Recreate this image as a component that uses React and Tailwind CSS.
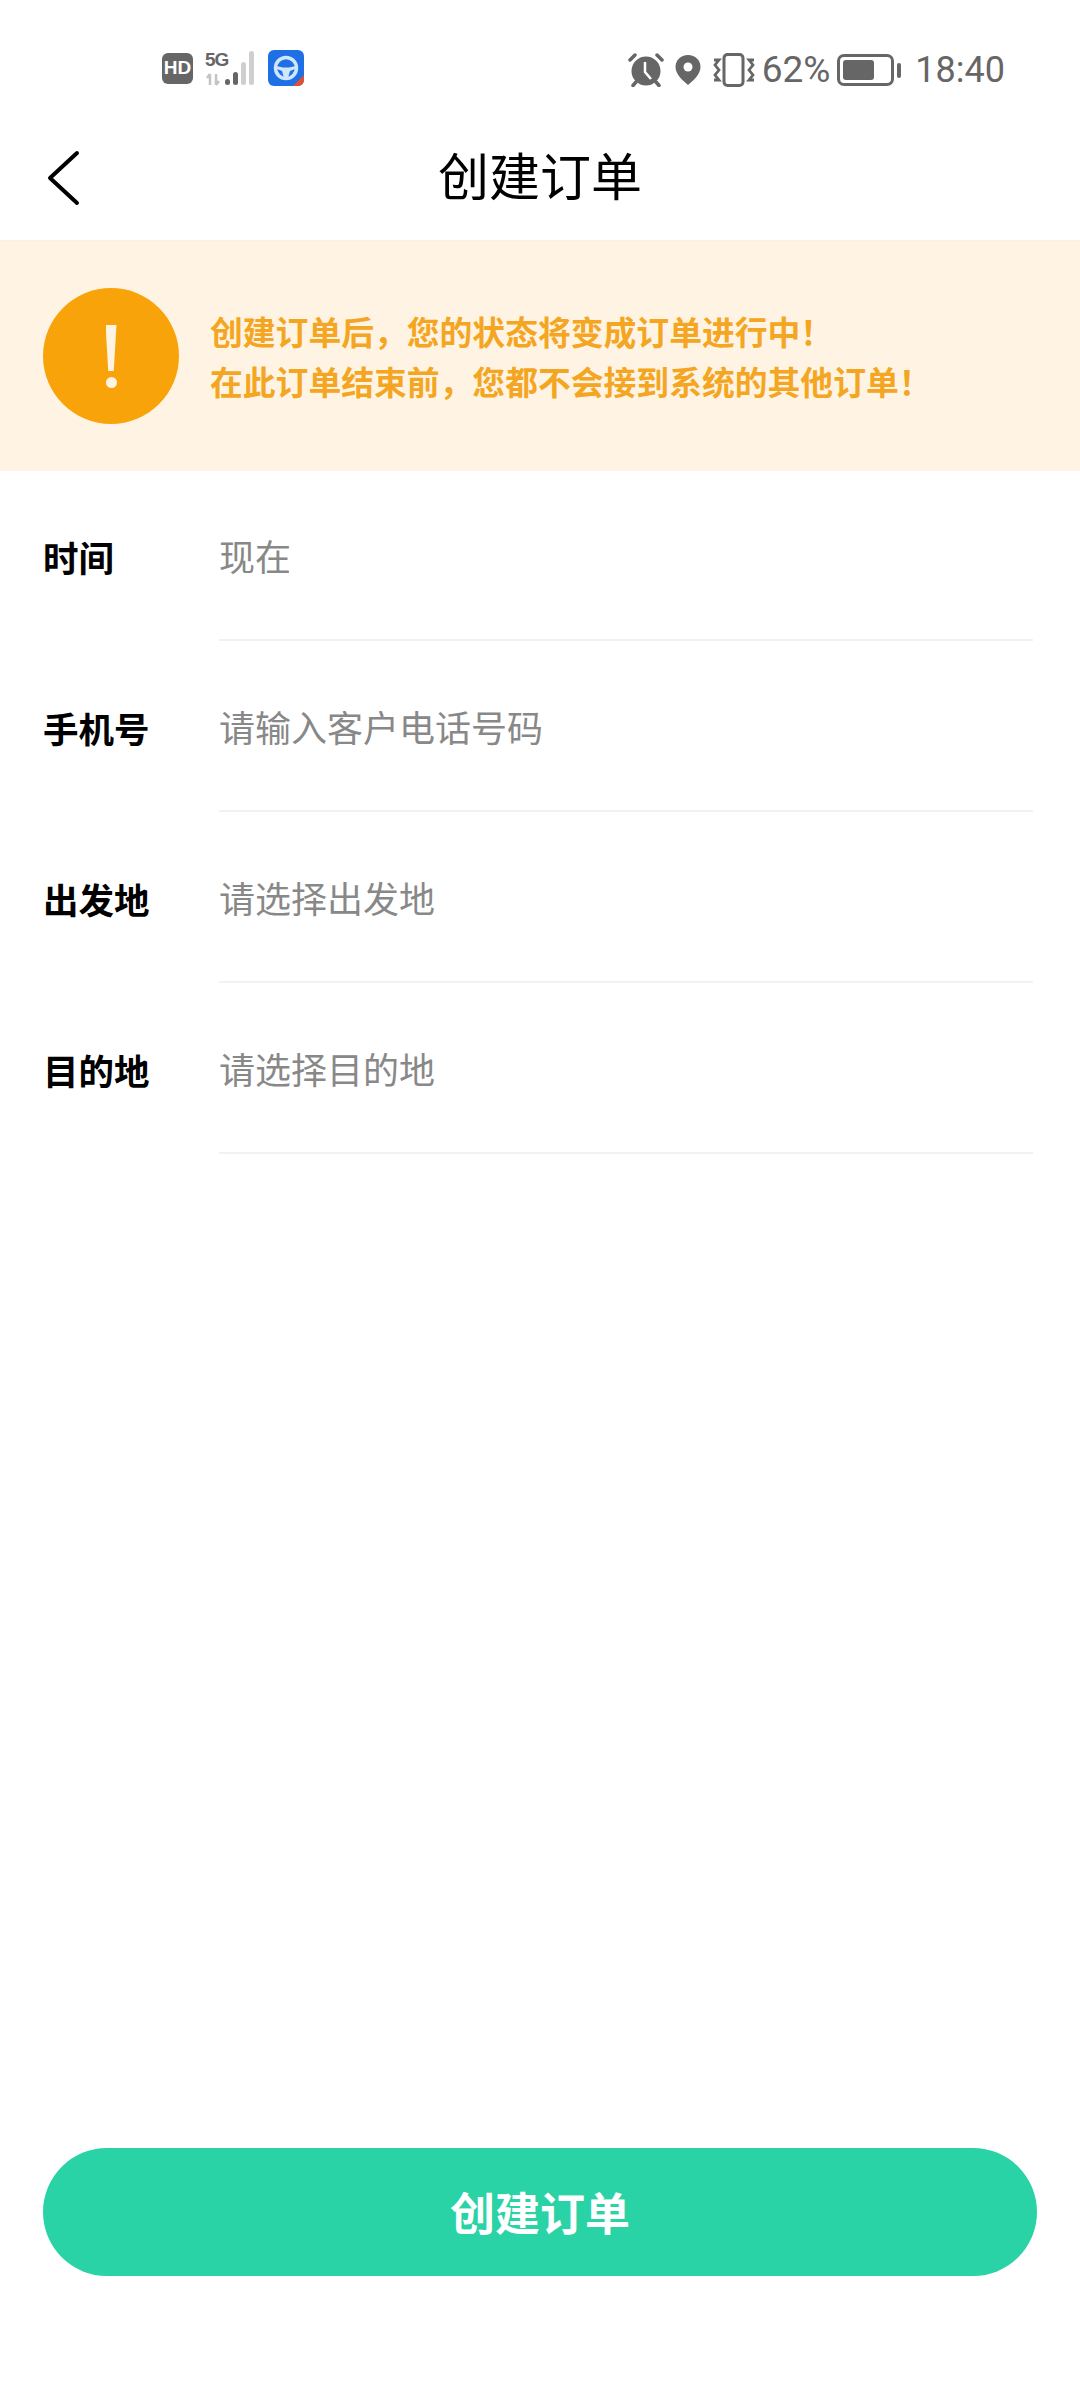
import React from 'react';

const cjk = { fontFamily: '"Noto Sans CJK SC", "Noto Sans", sans-serif' };

const rows = [
  { label: '时间', placeholder: '现在' },
  { label: '手机号', placeholder: '请输入客户电话号码' },
  { label: '出发地', placeholder: '请选择出发地' },
  { label: '目的地', placeholder: '请选择目的地' },
];

const SignalIcon = () => (
  <div className="relative w-[56px] h-[36px]">
    <span className="absolute left-[1px] top-[0px] text-[19px] leading-[19px] font-bold tracking-[-1px] text-[#666] font-['Liberation_Sans',sans-serif]">5G</span>
    <svg className="absolute inset-0" width="56" height="36" viewBox="0 0 56 36">
      <path d="M6 24v11M3 28l3-4M12 24v11M12 35l3-4" stroke="#c4c4c4" strokeWidth="2.500" fill="none" />
      <rect x="21" y="29" width="5" height="6" rx="2.500" fill="#666" />
      <rect x="29" y="22" width="5" height="13" rx="2.500" fill="#666" />
      <rect x="37" y="12" width="5" height="23" rx="2.500" fill="#cfcfcf" />
      <rect x="45" y="1" width="5" height="34" rx="2.500" fill="#cfcfcf" />
    </svg>
  </div>
);

const AppIcon = () => (
  <svg width="36" height="36" viewBox="0 0 36 36">
    <rect width="36" height="36" rx="6" fill="#1f6fe5" />
    <circle cx="18" cy="18" r="10.500" fill="none" stroke="#cfe6fb" strokeWidth="3.500" />
    <path d="M8 16l7 1.500h6L28 16l-1 3-5 2-2 7h-4l-2-7-5-2z" fill="#cfe6fb" />
    <path d="M25 36l11-11v5a6 6 0 0 1-6 6z" fill="#e2502f" />
  </svg>
);

const AlarmIcon = () => (
  <svg width="36" height="34" viewBox="0 0 36 34">
    <circle cx="18" cy="18" r="14.500" fill="#666" />
    <path d="M17 9v10l6 7" stroke="#fff" strokeWidth="2.500" fill="none" />
    <path d="M2 7l5-5M34 7l-5-5" stroke="#666" strokeWidth="3.500" strokeLinecap="round" />
    <path d="M8 29l-3 3.500M28 29l3 3.500" stroke="#666" strokeWidth="3.500" strokeLinecap="round" />
  </svg>
);

const PinIcon = () => (
  <svg width="26" height="30" viewBox="0 0 26 30">
    <path d="M13 0C5.800 0 .5 5.400.5 12c0 7 6.500 13 12.500 18 6-5 12.500-11 12.500-18C25.500 5.400 20.200 0 13 0z" fill="#666" />
    <circle cx="13" cy="12" r="4.500" fill="#fff" />
  </svg>
);

const VibrateIcon = () => (
  <svg width="42" height="34" viewBox="0 0 42 34">
    <rect x="11" y="1.500" width="19" height="31" rx="3.500" fill="none" stroke="#666" strokeWidth="3" />
    <path d="M1 7h5l-4 5 4 5-4 5 4 5H1M41 7h-5l4 5-4 5 4 5-4 5h5" fill="none" stroke="#666" strokeWidth="2.800" />
  </svg>
);

const BatteryIcon = () => (
  <div className="flex items-center">
    <div className="w-[57px] h-[32px] rounded-[7px] border-[3px] border-[#666] p-[3px]">
      <div className="w-[31px] h-full rounded-[3px] bg-[#666]" />
    </div>
    <div className="w-[4px] h-[15px] rounded-[2px] bg-[#666] ml-[3px]" />
  </div>
);

const App = () => {
  return (
    <div className="w-[1080px] h-[2400px] bg-white flex flex-col" style={cjk}>
      <div className="h-[92px] pt-[51px] pl-[162px] pr-[75px] flex items-start justify-between">
        <div className="flex items-center gap-[11px] -mt-[1px]">
          <div className="w-[31px] h-[31px] rounded-[6px] bg-[#666] flex items-center justify-center text-white text-[19px] font-bold font-['Liberation_Sans',sans-serif]">
            HD
          </div>
          <SignalIcon />
          <div className="-ml-[3px]">
            <AppIcon />
          </div>
        </div>
        <div className="flex items-center text-[#666] font-['Roboto',sans-serif] h-[36px] mt-[1px]">
          <AlarmIcon />
          <div className="w-[11px]" />
          <PinIcon />
          <div className="w-[12px]" />
          <VibrateIcon />
          <span className="text-[37px] ml-[7px] mr-[7px]">62%</span>
          <BatteryIcon />
          <span className="text-[36px] ml-[14px]">18:40</span>
        </div>
      </div>

      <div className="h-[148px] relative flex items-center justify-center">
        <svg className="absolute left-[46px] top-[58px]" width="34" height="56" viewBox="0 0 34 56">
          <path d="M31 3L4 28l27 25" fill="none" stroke="#000" strokeWidth="4" strokeLinecap="round" strokeLinejoin="round" />
        </svg>
        <h1 className="text-[51px] text-black font-normal mt-[16px]">创建订单</h1>
      </div>

      <div className="h-[231px] bg-[#fff4e3] border-t border-[#f6f2ea] pl-[43px] flex items-center gap-[31px]">
        <div className="w-[136px] h-[136px] rounded-full bg-[#f9a30b] flex flex-col items-center pt-[37px] shrink-0">
          <div className="w-[11px] h-[46px] bg-[#fff4e3] [clip-path:polygon(0_0,100%_0,75%_100%,25%_100%)]" />
          <div className="w-[11px] h-[11px] rounded-full bg-[#fff4e3] mt-[6px]" />
        </div>
        <div className="text-[32.800px] leading-[50px] font-bold text-[#f4a622] whitespace-nowrap">
          <p>创建订单后，您的状态将变成订单进行中！</p>
          <p>在此订单结束前，您都不会接到系统的其他订单！</p>
        </div>
      </div>

      <div className="-mt-[1px]">
        {rows.map((row) => (
          <div key={row.label} className="flex pl-[43px] pr-[47px]">
            <div className="w-[176px] h-[171px] pt-[2px] flex items-center text-[35.500px] font-bold text-black">
              {row.label}
            </div>
            <div className="flex-1 h-[171px] border-b-2 border-[#f2f2f2] flex items-center text-[36px] text-[#888]">
              {row.placeholder}
            </div>
          </div>
        ))}
      </div>

      <div className="flex-1" />

      <button className="mx-[43px] mb-[124px] h-[128px] rounded-full bg-[#2ad3a5] text-white text-[45px] font-bold">
        创建订单
      </button>
    </div>
  );
};

export default App;
